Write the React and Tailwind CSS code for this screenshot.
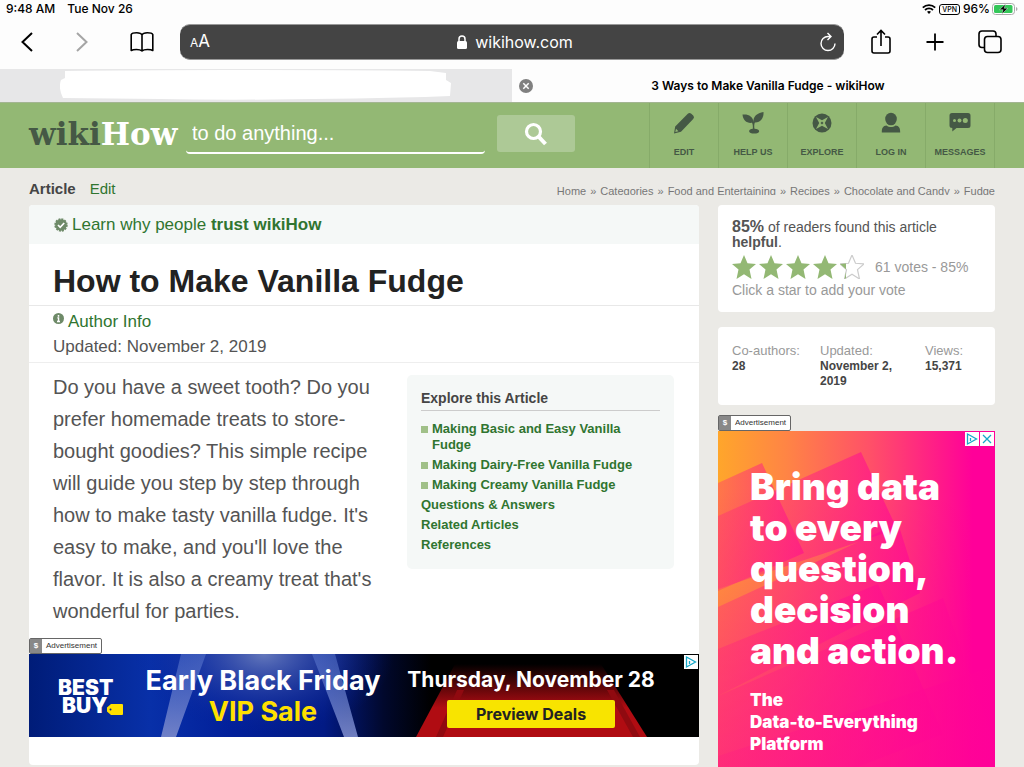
import React from 'react';

const NAV_ITEMS = [
  { label: 'EDIT', Icon: PencilIcon },
  { label: 'HELP US', Icon: SproutIcon },
  { label: 'EXPLORE', Icon: CompassIcon },
  { label: 'LOG IN', Icon: PersonIcon },
  { label: 'MESSAGES', Icon: MessageIcon },
];

const CRUMBS = ['Home', 'Categories', 'Food and Entertaining', 'Recipes', 'Chocolate and Candy', 'Fudge'];

const METHODS = ['Making Basic and Easy Vanilla Fudge', 'Making Dairy-Free Vanilla Fudge', 'Making Creamy Vanilla Fudge'];

const SECTIONS = ['Questions & Answers', 'Related Articles', 'References'];

const STAR = 'M12 0l3.500 8.300 8.500.6-6.500 5.700 2 9.400-7.500-4.700L4.500 24l2-9.400L0 8.900l8.500-.6z';

function PencilIcon() {
  return (
    <svg className="w-6 h-6" viewBox="0 0 24 24" fill="currentColor">
      <path d="M2 22.500l1.200-7L15.800 2.700q1.700-1.600 3.500 0l1.900 1.800q1.700 1.700 0 3.500L9 20.700zM3.300 21l3.100-.7-2.400-2.500z" fillRule="evenodd" />
    </svg>
  );
}

function SproutIcon() {
  return (
    <svg className="w-6 h-6" viewBox="0 0 24 24" fill="currentColor">
      <path d="M12.500 11C12 5.500 16 2 22.500 1c.4 6-3 10.700-8.600 10.500-.8 1.500-.8 4.500-.4 6.300 2.700 0 4.700 1 4.700 2.400 0 1.500-2.200 2.300-5 2.300s-5.100-.8-5.100-2.300c0-1.400 1.600-2.200 3.700-2.400.2-2 .1-4.300-.8-6C6 12.500 2 9.500 1.500 3.500 7.500 2.800 12 5.500 12.500 11z" />
    </svg>
  );
}

function CompassIcon() {
  return (
    <svg className="w-6 h-6" viewBox="0 0 24 24">
      <circle cx="12" cy="12" r="9.500" fill="currentColor" />
      <path d="M6 6l6 3.200L18 6l-3.200 6 3.200 6-6-3.200L6 18l3.200-6z" fill="#93b874" />
      <path d="M12 10.500l1.500 1.500-1.500 1.500-1.500-1.500z" fill="currentColor" />
    </svg>
  );
}

function PersonIcon() {
  return (
    <svg className="w-6 h-6" viewBox="0 0 24 24" fill="currentColor">
      <ellipse cx="12" cy="8" rx="5.800" ry="6.300" />
      <path d="M2.800 21.500c0-4.500 1.200-6.500 4.700-6.900 2.700 2 6.300 2 9 0 3.500.4 4.700 2.400 4.700 6.900z" />
    </svg>
  );
}

function MessageIcon() {
  return (
    <svg className="w-6 h-6" viewBox="0 0 24 24">
      <path d="M4 2h16q2.500 0 2.500 2.500v10q0 2.500-2.500 2.500H8.500L4.300 20.500V17Q1.500 17 1.500 14.500v-10Q1.500 2 4 2z" fill="currentColor" />
      <g fill="#93b874">
        <circle cx="6.500" cy="9.500" r="1.500" />
        <circle cx="11.500" cy="9.500" r="2" />
        <circle cx="17.300" cy="9.500" r="2.500" />
      </g>
    </svg>
  );
}

function StatusBar() {
  return (
    <div className="flex items-center justify-between h-[18px] px-[6px] text-[12px] font-medium text-black">
      <div className="flex gap-3">
        <span>9:48 AM</span>
        <span>Tue Nov 26</span>
      </div>
      <div className="flex items-center gap-[3px]">
        <svg className="w-[14px] h-[10px]" viewBox="0 0 14 10" fill="none" stroke="#000" strokeWidth="1.800">
          <path d="M.8 3.600a9 9 0 0 1 12.400 0M3 6a5.800 5.800 0 0 1 8 0" />
          <path d="M5 7.800a3 3 0 0 1 4 0L7 10z" fill="#000" stroke="none" />
        </svg>
        <span className="flex items-center h-[11px] px-[2px] border border-black rounded-[3px] text-[7px] leading-none">VPN</span>
        <span>96%</span>
        <svg className="w-[26px] h-3 -ml-px" viewBox="0 0 26 12">
          <rect x=".5" y=".5" width="22" height="11" rx="3" fill="#fff" stroke="#aaa" />
          <rect x="2" y="2" width="18.500" height="8" rx="1.500" fill="#34c759" />
          <path d="M24 4v4q1.500-.7 1.500-2T24 4z" fill="#aaa" />
          <path d="M13.500 1L7.500 6.700h3.600L9.800 11l6-5.700h-3.600z" fill="#000" stroke="#fff" strokeWidth=".4" />
        </svg>
      </div>
    </div>
  );
}

function BrowserBar() {
  return (
    <div className="flex items-center h-[51px] pl-[18px] pr-[21px] pb-1 text-black">
      <button aria-label="Back" className="w-5">
        <svg className="w-5 h-6" viewBox="0 0 20 24" fill="none" stroke="currentColor" strokeWidth="2">
          <path d="M14 3L4.500 12l9.500 9" />
        </svg>
      </button>
      <button aria-label="Forward" className="w-5 ml-[34px] text-[#a5a5a5]">
        <svg className="w-5 h-6" viewBox="0 0 20 24" fill="none" stroke="currentColor" strokeWidth="2">
          <path d="M5 3l9.500 9L5 21" />
        </svg>
      </button>
      <button aria-label="Bookmarks" className="w-6 ml-[38px]">
        <svg className="w-6 h-6" viewBox="0 0 24 24" fill="none" stroke="currentColor" strokeWidth="1.600" strokeLinejoin="round">
          <path d="M12 5Q11 2.800 6.700 2.800 2 2.800 1.200 4.500V20.500q1.500-1 5.300-1T12 21q1.500-1.500 5.500-1.500t5.300 1V4.500Q22 2.800 17.300 2.800 13 2.800 12 5v16" />
        </svg>
      </button>
      <div className="flex flex-1 items-center justify-between h-9 ml-[26px] pl-[10px] pr-2 rounded-[10px] bg-[#444] border-y border-[#999] text-white">
        <button aria-label="Page settings" className="text-[12px]">A<span className="text-[17px]">A</span></button>
        <div className="flex items-center gap-2 text-[16px]">
          <svg className="w-[10px] h-[14px]" viewBox="0 0 10 14">
            <rect y="6" width="10" height="8" rx="1.500" fill="#fff" />
            <path d="M2 7V4a3 3 0 0 1 6 0v3" fill="none" stroke="#fff" strokeWidth="1.500" />
          </svg>
          wikihow.com
        </div>
        <button aria-label="Reload">
          <svg className="w-4 h-5" viewBox="0 0 16 20" fill="none" stroke="currentColor" strokeWidth="1.400">
            <path d="M15 11.500A7 7 0 1 1 8 4.500h3M7.500 1L11 4.500 7.500 8" />
          </svg>
        </button>
      </div>
      <button aria-label="Share" className="ml-[26px]">
        <svg className="w-[22px] h-[26px]" viewBox="0 0 22 26" fill="none" stroke="currentColor" strokeWidth="1.600">
          <path d="M7 8H4Q2 8 2 10v12q0 2 2 2h14q2 0 2-2V10q0-2-2-2h-3M11 17V1.500M7 5.500l4-4 4 4" />
        </svg>
      </button>
      <button aria-label="New tab" className="ml-[33px]">
        <svg className="w-5 h-5" viewBox="0 0 20 20" stroke="currentColor" strokeWidth="1.800">
          <path d="M10 1.500v17M1.500 10h17" />
        </svg>
      </button>
      <button aria-label="Tabs" className="ml-[32px]">
        <svg className="w-[26px] h-[26px]" viewBox="0 0 26 26" fill="none" stroke="currentColor" strokeWidth="1.600">
          <rect x="7.500" y="7.500" width="16.500" height="16" rx="3" />
          <path d="M7.500 18.500H5q-3 0-3-3V5q0-3 3-3h11q3 0 3 3v2.500" />
        </svg>
      </button>
    </div>
  );
}

function TabBar() {
  return (
    <div className="grid grid-cols-2 h-[33px]">
      <div className="bg-[#e7e7e8] pl-[60px] pr-[61px] pt-px">
        <svg className="w-full h-[30px]" viewBox="0 0 391 30" preserveAspectRatio="none" fill="#fff">
          <path d="M5 1Q150-1 370 1l16 2v7l5 3-1 13-25 1Q200 31 100 29L3 28Q-2 18 1 10l4-2z" />
        </svg>
      </div>
      <div className="flex items-center pl-[7px] pr-[21px] bg-[#fdfdfd]">
        <button aria-label="Close tab" className="w-[14px]">
          <svg className="w-[14px] h-[14px]" viewBox="0 0 14 14">
            <circle cx="7" cy="7" r="7" fill="#808080" />
            <path d="M4.300 4.300l5.400 5.400M9.700 4.300L4.300 9.700" stroke="#fff" strokeWidth="1.500" />
          </svg>
        </button>
        <span className="flex-1 text-center text-[12px] font-semibold text-black">3 Ways to Make Vanilla Fudge - wikiHow</span>
      </div>
    </div>
  );
}

function SiteHeader() {
  return (
    <header className="flex h-[66px] px-[29px] bg-[#93b874] border-t border-[#a3b592]">
      <a href="#" className="w-[149px] pt-[15px] text-[31px] leading-[32px] font-bold text-[#455845] font-['DejaVu_Serif',serif]">
        wiki<span className="text-white">How</span>
      </a>
      <form className="flex flex-1 items-start pt-3" onSubmit={(e) => e.preventDefault()}>
        <input
          aria-label="Search wikiHow"
          placeholder="to do anything..."
          className="w-[299px] h-[39px] ml-2 px-[6px] text-[20px] text-white placeholder:text-white placeholder:opacity-100 border-b-2 border-white rounded-[4px] bg-transparent"
        />
        <button aria-label="Search" className="flex items-center justify-center w-[78px] h-[37px] ml-3 rounded-[3px] bg-[#adc996]">
          <svg className="w-6 h-6" viewBox="0 0 24 24" fill="none" stroke="#fff" strokeWidth="3.200">
            <circle cx="9.500" cy="9.500" r="7" />
            <path d="M14.500 14.500l7 7.500" strokeWidth="4" />
          </svg>
        </button>
      </form>
      <nav className="flex border-r border-[#86ab69]">
        {NAV_ITEMS.map(({ label, Icon }) => (
          <a key={label} href="#" className="flex flex-col items-center w-[69px] pt-2 gap-[11px] border-l border-[#86ab69] text-[#455845] text-[9px] leading-[12px] font-bold">
            <Icon />
            {label}
          </a>
        ))}
      </nav>
    </header>
  );
}

function AdLabel() {
  return (
    <div className="flex w-[73px] h-4 border border-[#666] rounded-[2px] bg-white text-[8px] leading-[14px] text-[#333]">
      <span className="w-3 text-center font-bold text-white bg-[#888]">$</span>
      <span className="flex-1 text-center">Advertisement</span>
    </div>
  );
}

function AdChoices() {
  return (
    <svg className="w-[14px] h-[14px]" viewBox="0 0 14 14" fill="none" stroke="#16a8c8" strokeWidth="1.300">
      <rect width="14" height="14" fill="#fff" stroke="none" />
      <path d="M2.500 2l9 5-9 5zM5.500 6v3" />
    </svg>
  );
}

function BannerAd() {
  return (
    <a href="#" className="relative flex h-[83px] overflow-hidden bg-black text-white font-['Inter',sans-serif] font-bold">
      <svg className="absolute inset-0 w-full h-full" viewBox="0 0 670 83" preserveAspectRatio="none">
        <defs>
          <linearGradient id="night">
            <stop offset="0" stopColor="#001c78" />
            <stop offset=".18" stopColor="#0830a8" />
            <stop offset=".3" stopColor="#02209a" />
            <stop offset=".44" stopColor="#021a84" />
            <stop offset=".53" stopColor="#01082c" />
            <stop offset=".6" stopColor="#000" />
          </linearGradient>
          <radialGradient id="glow" gradientUnits="userSpaceOnUse" cx="0" cy="0" r="1" gradientTransform="translate(235 0) scale(130 80)">
            <stop offset="0" stopColor="#6478bc" />
            <stop offset="1" stopColor="#02209a" stopOpacity="0" />
          </radialGradient>
          <linearGradient id="carpet" x2="0" y2="1">
            <stop offset="0" stopColor="#000" />
            <stop offset=".6" stopColor="#b00c12" />
          </linearGradient>
          <linearGradient id="beam" x2="0" y2="1">
            <stop offset="0" stopColor="#5a78cf" stopOpacity=".5" />
            <stop offset="1" stopColor="#7c8acb" stopOpacity=".9" />
          </linearGradient>
        </defs>
        <rect width="670" height="83" fill="url(#night)" />
        <rect width="400" height="83" fill="url(#glow)" />
        <path d="M152 0h25l-30 83h-15zM283 0h23l23 83h-14z" fill="url(#beam)" />
        <path d="M426 10h146l46 73H387z" fill="url(#carpet)" />
        <path d="M428 36l-21 47h7l21-47zM578 36l26 47h7l-26-47z" fill="#900a10" />
      </svg>
      <div className="relative flex items-center w-[108px] pl-[29px] pt-[3px] text-[21px] leading-[18px] font-black">
        <div className="flex flex-col">
          <span>BEST</span>
          <span className="flex items-end pl-1">
            BUY
            <svg className="w-4 h-[11px] shrink-0" viewBox="0 0 16 11">
              <path d="M4 0h11q1 0 1 1v9q0 1-1 1H4L0 7.500v-4z" fill="#ffe000" />
              <circle cx="3.500" cy="5.500" r="1" fill="#02209a" />
            </svg>
          </span>
        </div>
      </div>
      <div className="relative w-[252px] pt-[11px] text-center text-[27px] leading-[31px] whitespace-nowrap">
        <p>Early Black Friday</p>
        <p className="text-[#ffe000]">VIP Sale</p>
      </div>
      <div className="relative flex flex-col items-center flex-1 pt-[13px] pr-[26px] text-[21px] leading-[26px] whitespace-nowrap">
        <p>Thursday, November 28</p>
        <span className="w-[168px] h-7 mt-[7px] rounded-[2px] bg-[#f8e400] text-center text-[16px] leading-7 text-[#222]">Preview Deals</span>
      </div>
      <div className="absolute top-px right-px"><AdChoices /></div>
    </a>
  );
}

function SidebarAd() {
  return (
    <a href="#" className="relative block h-[600px] overflow-hidden text-white font-black font-['Inter',sans-serif]">
      <svg className="absolute inset-0 w-full h-full" viewBox="0 0 277 600" preserveAspectRatio="none">
        <defs>
          <linearGradient id="warm">
            <stop offset="0" stopColor="#ffa62b" />
            <stop offset=".25" stopColor="#ff8445" />
            <stop offset=".55" stopColor="#ff5068" />
            <stop offset=".92" stopColor="#ff0099" />
          </linearGradient>
          <linearGradient id="fade" x2="0" y2="1">
            <stop offset=".1" stopColor="#ff0099" stopOpacity="0" />
            <stop offset=".6" stopColor="#ff0099" stopOpacity=".6" />
          </linearGradient>
          <linearGradient id="stripe">
            <stop offset="0" stopColor="#ff2080" stopOpacity=".35" />
            <stop offset="1" stopColor="#ff0099" stopOpacity=".55" />
          </linearGradient>
        </defs>
        <rect width="277" height="600" fill="url(#warm)" />
        <rect width="277" height="600" fill="url(#fade)" />
        <g fill="url(#stripe)">
          <path d="M0 52l44-20 42 90L0 160z" />
          <path d="M0 85l143-64 36 77L0 158z" />
          <path d="M0 176l100-46 80-38 22 70L0 265z" />
          <path d="M0 218l160-65 65 150L0 390z" />
          <path d="M0 265l225-98 60 170L0 470z" />
          <path d="M0 325l277-90v365H0z" />
        </g>
      </svg>
      <div className="relative pt-[35px] pl-8 text-[37px] leading-[41px] whitespace-nowrap">
        <p>Bring data</p>
        <p>to every</p>
        <p>question,</p>
        <p>decision</p>
        <p>and action.</p>
      </div>
      <div className="relative pt-[18px] pl-8 text-[17px] leading-[22px] whitespace-nowrap">
        <p>The</p>
        <p>Data-to-Everything</p>
        <p>Platform</p>
      </div>
      <div className="absolute top-px right-px flex gap-px">
        <AdChoices />
        <svg className="w-[14px] h-[14px]" viewBox="0 0 14 14" stroke="#16a8c8" strokeWidth="1.300">
          <rect width="14" height="14" fill="#fff" stroke="none" />
          <path d="M3 3l8 8M11 3l-8 8" />
        </svg>
      </div>
    </a>
  );
}

function Article() {
  return (
    <main className="flex-1 self-start min-w-0 rounded-[4px] overflow-hidden bg-white text-[#545454]">
      <a href="#" className="flex items-center h-[39px] pl-[25px] gap-1 bg-[#f5f8f7] text-[17px] text-[#307530]">
        <svg className="w-[14px] h-[14px]" viewBox="0 0 14 14">
          <circle cx="7" cy="7" r="5.800" fill="#6e8a68" stroke="#6e8a68" strokeWidth="1.800" strokeDasharray="2 1" />
          <path d="M4 7l2.200 2.300L10.200 5" fill="none" stroke="#fff" strokeWidth="1.700" />
        </svg>
        <span>Learn why people <b>trust wikiHow</b></span>
      </a>
      <h1 className="h-[62px] pl-6 pt-4 text-[32px] leading-[42px] font-bold text-[#222] border-b border-[#e8e8e8]">How to Make Vanilla Fudge</h1>
      <div className="h-[57px] pl-6 pt-[3px] text-[17px] leading-[25px] border-b border-[#eee]">
        <a href="#" className="flex text-[#307530] gap-1">
          <svg className="w-[11px] h-[11px] mt-1" viewBox="0 0 11 11">
            <circle cx="5.500" cy="5.500" r="5.500" fill="#6e8a68" />
            <path d="M5.500 2v1.800M4.300 5h1.200v3.500M4 8.500h3" stroke="#fff" strokeWidth="1.500" />
          </svg>
          Author Info
        </a>
        <p>Updated: November 2, 2019</p>
      </div>
      <div className="flex items-start gap-6 pl-6 pr-[25px] pt-2">
        <p className="flex-1 text-[20px] leading-8">
          Do you have a sweet tooth? Do you prefer homemade treats to store-bought goodies? This simple recipe will guide you
          step by step through how to make tasty vanilla fudge. It's easy to make, and you'll love the flavor. It is also a
          creamy treat that's wonderful for parties.
        </p>
        <section className="w-[267px] mt-1 px-[14px] pt-3 pb-4 rounded-[5px] bg-[#f5f8f7] text-[13px] leading-4 font-bold text-[#307530]">
          <h2 className="pt-[3px] pb-1 mb-[10px] border-b border-[#ccc] text-[14px] leading-4 text-[#454545]">Explore this Article</h2>
          <ul className="flex flex-col gap-1">
            {METHODS.map((name) => (
              <li key={name} className="flex gap-1">
                <span className="w-[7px] h-[7px] mt-[5px] shrink-0 bg-[#a0c088]" />
                <a href="#">{name}</a>
              </li>
            ))}
            {SECTIONS.map((name) => (
              <li key={name}><a href="#">{name}</a></li>
            ))}
          </ul>
        </section>
      </div>
      <div className="pt-[11px] pb-7">
        <AdLabel />
        <BannerAd />
      </div>
    </main>
  );
}

function Sidebar() {
  return (
    <aside className="w-[277px]">
      <section className="h-[107px] px-[14px] pt-[14px] rounded-[4px] bg-white text-[14px] leading-[15px] text-[#545454]">
        <p><b className="text-[16px]">85%</b> of readers found this article <b>helpful</b>.</p>
        <div className="flex items-center pt-[5px] text-[#999]">
          {[0, 1, 2, 3].map((n) => (
            <button key={n} aria-label={`Rate ${n + 1} stars`} className="mr-[3px]">
              <svg className="w-6 h-6" viewBox="0 0 24 24" fill="#93b874"><path d={STAR} /></svg>
            </button>
          ))}
          <button aria-label="Rate 5 stars">
            <svg className="w-6 h-6" viewBox="0 0 24 24">
              <defs><clipPath id="part"><path d="M0 0h6v24H0z" /></clipPath></defs>
              <path d={STAR} fill="#fff" stroke="#ccc" strokeWidth="1.200" />
              <path d={STAR} fill="#93b874" clipPath="url(#part)" />
            </svg>
          </button>
          <span className="pl-[11px]">61 votes - 85%</span>
        </div>
        <p className="pt-1 text-[#999]">Click a star to add your vote</p>
      </section>
      <section className="flex h-[78px] mt-[15px] px-[14px] pt-4 rounded-[4px] bg-white text-[13px] leading-4 text-[#999]">
        <div className="w-[88px]">Co-authors:<b className="block text-[12px] leading-[15px] text-[#454545]">28</b></div>
        <div className="w-[105px] pr-5">Updated:<b className="block text-[12px] leading-[15px] text-[#454545]">November 2, 2019</b></div>
        <div>Views:<b className="block text-[12px] leading-[15px] text-[#454545]">15,371</b></div>
      </section>
      <div className="pt-[10px]">
        <AdLabel />
        <SidebarAd />
      </div>
    </aside>
  );
}

export default function App() {
  return (
    <div className="h-screen overflow-hidden bg-[#ebeae6] font-['Liberation_Sans',Arial,sans-serif]">
      <div className="bg-[#fdfdfd] font-['Inter',sans-serif]">
        <StatusBar />
        <BrowserBar />
        <TabBar />
      </div>
      <SiteHeader />
      <div className="flex items-start justify-between h-[37px] px-[29px] pt-[11px]">
        <div className="flex gap-[14px] text-[15px] leading-5">
          <a href="#" className="font-bold text-[#454545]">Article</a>
          <a href="#" className="text-[#307530]">Edit</a>
        </div>
        <ol className="flex gap-1 h-[11px] mt-[5px] overflow-hidden text-[11px] leading-[14px] text-[#777]">
          {CRUMBS.map((name, i) => (
            <li key={name} className="flex gap-1">
              {i > 0 && <span>»</span>}
              <a href="#">{name}</a>
            </li>
          ))}
        </ol>
      </div>
      <div className="flex gap-[19px] px-[29px]">
        <Article />
        <Sidebar />
      </div>
    </div>
  );
}
